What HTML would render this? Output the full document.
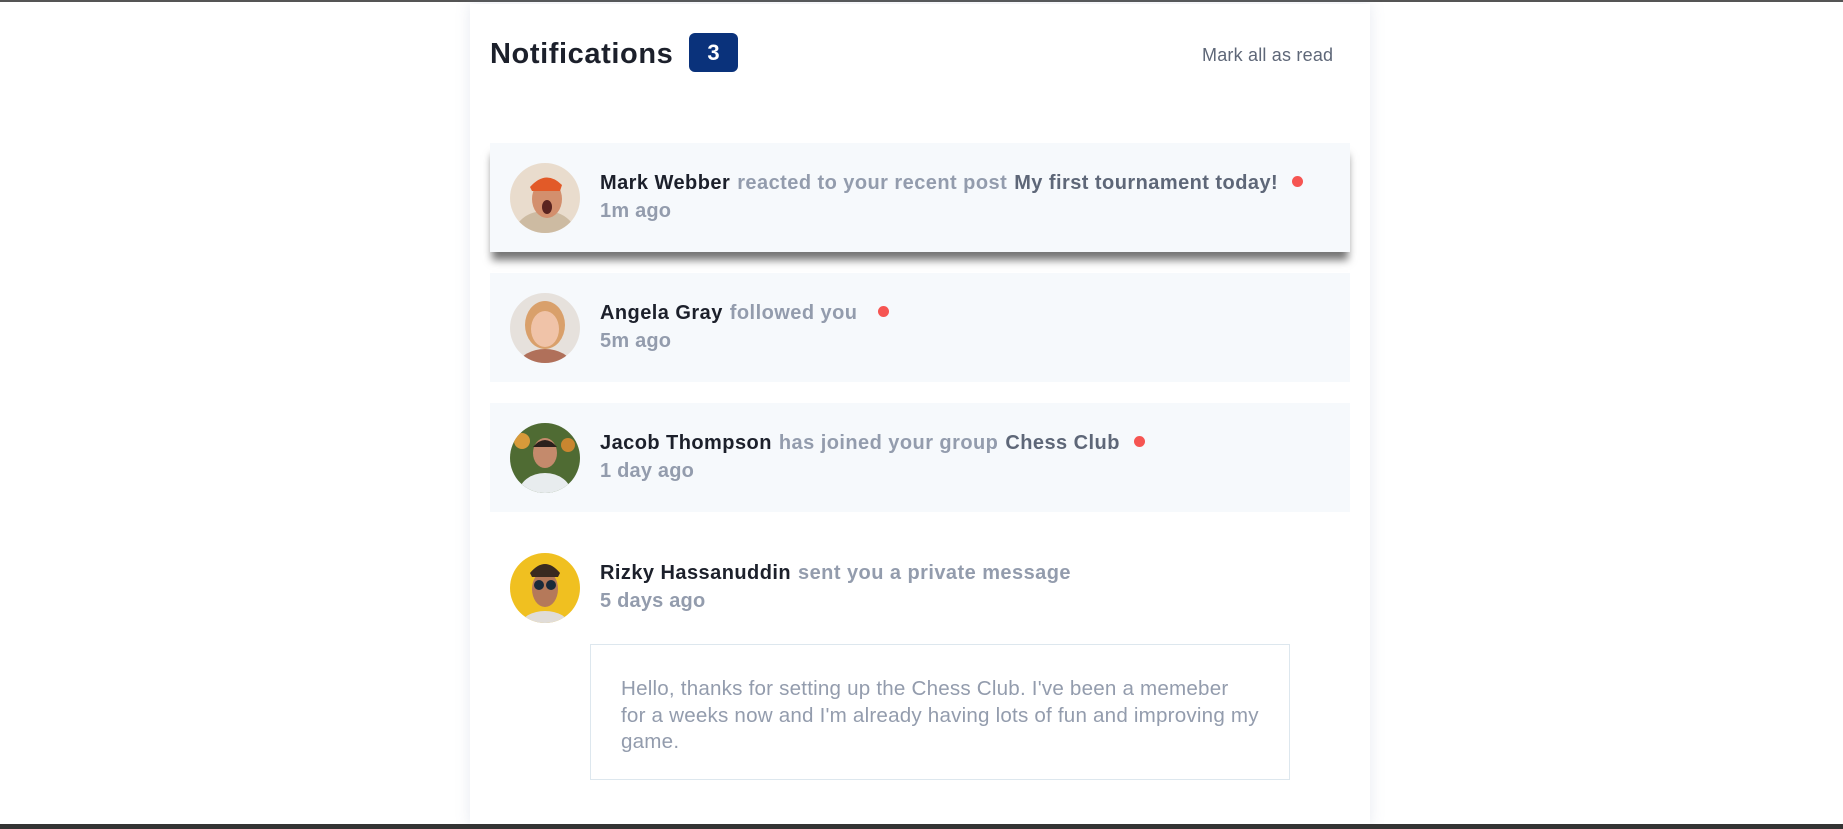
<!DOCTYPE html>
<html><head><meta charset="utf-8"><style>
*{margin:0;padding:0;box-sizing:border-box}
body{width:1843px;height:829px;background:#fff;font-family:"Liberation Sans",sans-serif;position:relative;overflow:hidden;border-top:2px solid #555}
.bot{position:absolute;left:0;right:0;bottom:0;height:5px;background:#333}
.card{position:absolute;left:470px;top:2px;width:900px;height:822px;background:#fff;box-shadow:0 0 14px rgba(120,140,180,.18)}
h1{position:absolute;left:20px;top:34px;font-size:29px;font-weight:bold;color:#1c202b;letter-spacing:0.6px}
.badge{position:absolute;left:219px;top:29px;width:49px;height:39px;background:#0a327b;color:#fff;border-radius:6px;font-weight:bold;font-size:22px;text-align:center;line-height:39px}
.mark{position:absolute;left:732px;top:41px;font-size:18px;color:#5e6778;letter-spacing:0.2px}
.item{position:absolute;left:20px;width:860px;height:109px;background:#f6f9fc}
.item.w{background:#fff}
.av{position:absolute;left:20px;top:20px;width:70px;height:70px;border-radius:50%;overflow:hidden}
.l1{position:absolute;left:110px;top:29px;font-size:20px;font-weight:bold;white-space:nowrap;letter-spacing:0.45px}
.l2{position:absolute;left:110px;top:57px;font-size:20px;font-weight:bold;color:#939cad;letter-spacing:0.2px}
.n{color:#1c202b}.a{color:#939cad;margin:0 7px}.p{color:#5e6778}
.dot{display:inline-block;width:11px;height:11px;border-radius:50%;background:#f65552;margin-left:14px;vertical-align:2px}
.msg{position:absolute;left:120px;top:640px;width:700px;height:136px;border:1px solid #dde7ee;padding:31px 30px 0 30px;font-size:20.6px;line-height:26.5px;color:#939cad;letter-spacing:0.2px;white-space:nowrap}
</style></head><body>
<div class="card">
<h1>Notifications</h1><div class="badge">3</div>
<div class="mark">Mark all as read</div>

<div class="item" style="top:139px;box-shadow:0 10px 8px -2px rgba(0,0,0,.55)">
<div class="av"><svg width="70" height="70"><rect width="70" height="70" fill="#e9dccd"/><ellipse cx="35" cy="70" rx="30" ry="22" fill="#cdbba2"/><ellipse cx="37" cy="36" rx="15" ry="19" fill="#d38f6d"/><path d="M20 24 Q36 6 52 22 L50 28 L22 28Z" fill="#e25a28"/><ellipse cx="37" cy="44" rx="5" ry="7" fill="#5a2420"/></svg></div>
<div class="l1"><span class="n">Mark Webber</span><span class="a">reacted to your recent post</span><span class="p">My first tournament today!</span><span class="dot"></span></div>
<div class="l2">1m ago</div></div>

<div class="item" style="top:269px">
<div class="av"><svg width="70" height="70"><rect width="70" height="70" fill="#e6e1dc"/><ellipse cx="35" cy="32" rx="20" ry="24" fill="#d9a06b"/><ellipse cx="35" cy="36" rx="14" ry="18" fill="#f0c3a8"/><ellipse cx="35" cy="72" rx="26" ry="16" fill="#b0705a"/></svg></div>
<div class="l1"><span class="n">Angela Gray</span><span class="a">followed you</span><span class="dot"></span></div>
<div class="l2">5m ago</div></div>

<div class="item" style="top:399px">
<div class="av"><svg width="70" height="70"><rect width="70" height="70" fill="#4f6b33"/><circle cx="12" cy="18" r="8" fill="#d89a3a"/><circle cx="58" cy="22" r="7" fill="#c98630"/><ellipse cx="35" cy="30" rx="12" ry="15" fill="#c48a6c"/><path d="M23 24 Q35 10 47 24Z" fill="#2b211c"/><ellipse cx="35" cy="70" rx="26" ry="20" fill="#e8ecee"/></svg></div>
<div class="l1"><span class="n">Jacob Thompson</span><span class="a">has joined your group</span><span class="p">Chess Club</span><span class="dot"></span></div>
<div class="l2">1 day ago</div></div>

<div class="item w" style="top:529px">
<div class="av"><svg width="70" height="70"><rect width="70" height="70" fill="#f0c020"/><ellipse cx="35" cy="36" rx="13" ry="18" fill="#b5795a"/><path d="M20 20 Q35 2 50 20 L48 24 L22 24Z" fill="#3a2a20"/><circle cx="29" cy="32" r="5" fill="#1a2a3a"/><circle cx="41" cy="32" r="5" fill="#1a2a3a"/><ellipse cx="35" cy="72" rx="24" ry="14" fill="#e0dcd8"/></svg></div>
<div class="l1"><span class="n">Rizky Hassanuddin</span><span class="a">sent you a private message</span></div>
<div class="l2">5 days ago</div></div>

<div class="msg">Hello, thanks for setting up the Chess Club. I've been a memeber<br>for a weeks now and I'm already having lots of fun and improving my<br>game.</div>
</div>
<div class="bot"></div>
</body></html>
